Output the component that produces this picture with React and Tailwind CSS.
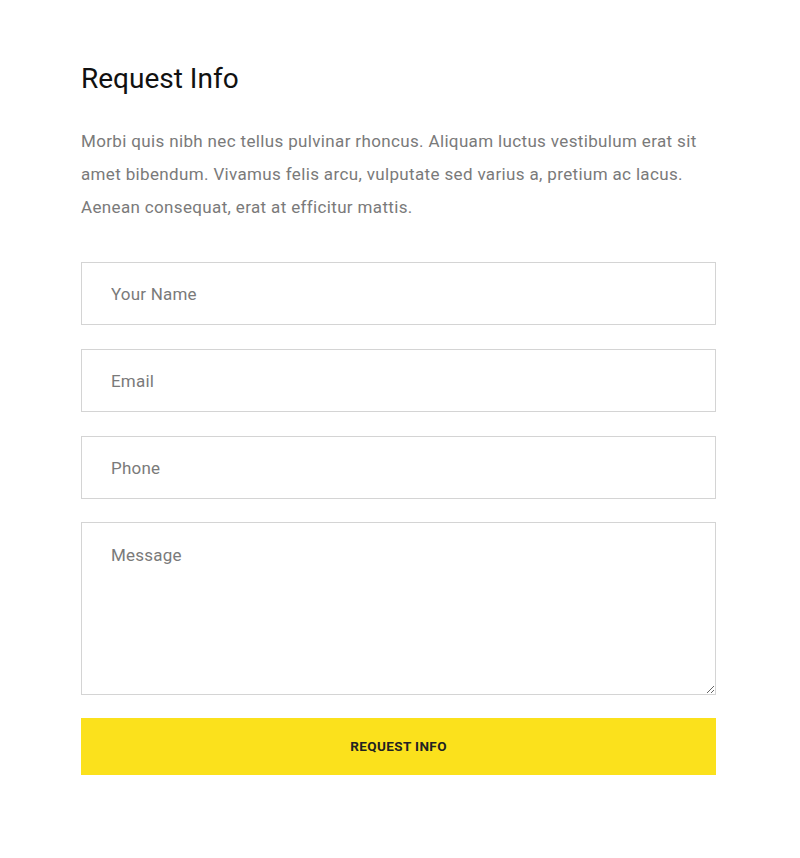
import React from "react";

export default function App() {
  const inputClass =
    "w-full h-[63px] px-[29px] border border-[#d4d4d4] bg-white text-[17px] tracking-[0.2px] text-[#555] placeholder:text-[#7a7a7a] outline-none";

  return (
    <div className="min-h-[858px] w-[800px] bg-white font-['Roboto',sans-serif]">
      <div className="pl-[81px] pr-[84px] pt-[62px]">
        <h2 className="text-[28px] leading-[34px] font-normal text-[#111] tracking-[0px]">
          Request Info
        </h2>

        <p className="mt-[29px] text-[17px] leading-[33px] text-[#7a7a7a] tracking-[0.35px]">
          Morbi quis nibh nec tellus pulvinar rhoncus. Aliquam luctus vestibulum erat sit
          amet bibendum. Vivamus felis arcu, vulputate sed varius a, pretium ac lacus.
          Aenean consequat, erat at efficitur mattis.
        </p>

        <form className="mt-[38px] flex flex-col gap-[24px]">
          <input type="text" placeholder="Your Name" className={inputClass} />
          <input type="email" placeholder="Email" className={inputClass} />
          <input type="tel" placeholder="Phone" className={inputClass} />
          <textarea
            placeholder="Message"
            className="-mt-[1px] w-full h-[173px] px-[29px] pt-[20px] border border-[#d4d4d4] bg-white text-[17px] tracking-[0.2px] text-[#555] placeholder:text-[#7a7a7a] outline-none block"
          />
          <button
            type="button"
            className="-mt-[1px] h-[57px] w-full bg-[#fbe11c] text-[13.5px] font-bold uppercase text-[#222] tracking-[0.4px]"
          >
            Request Info
          </button>
        </form>
      </div>
    </div>
  );
}
